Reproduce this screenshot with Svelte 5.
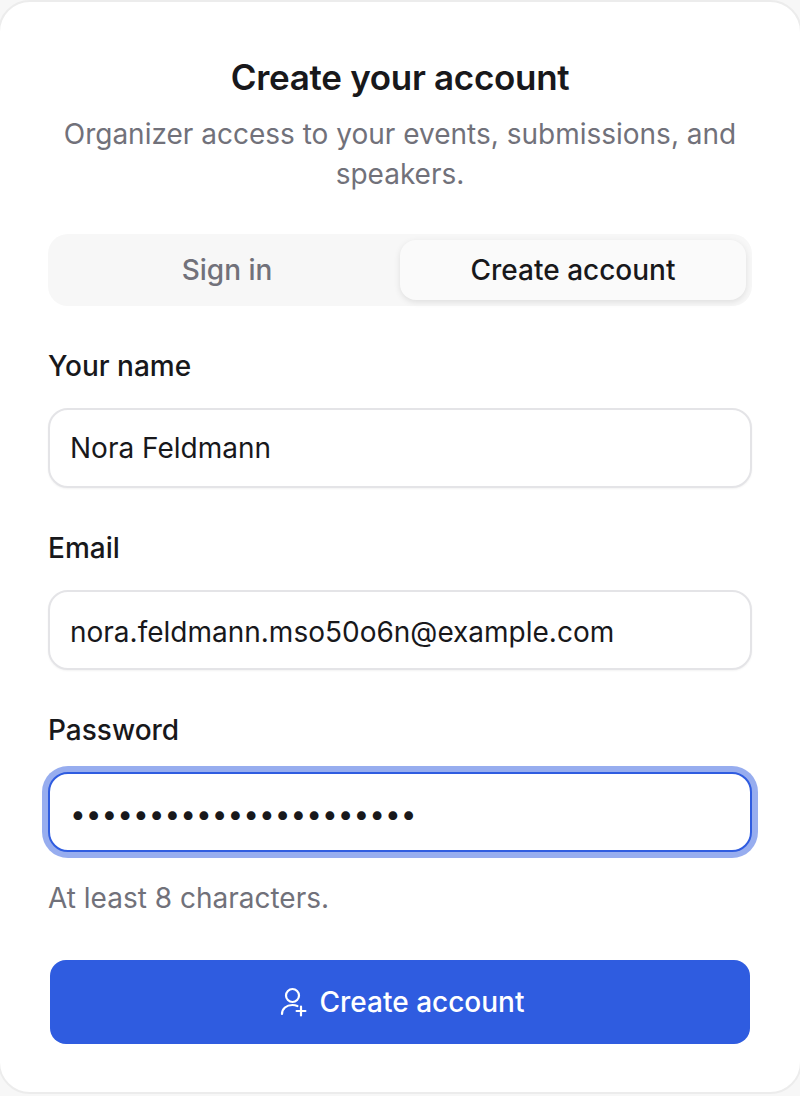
<script>
  let mode = $state('create');
  let name = $state('Nora Feldmann');
  let email = $state('nora.feldmann.mso50o6n@example.com');
  let password = $state('abcdefghijklmnopqrstuv');
</script>

<div class="page">
  <div class="card">
    <header class="head">
      <h1>Create your account</h1>
      <p>Organizer access to your events, submissions, and speakers.</p>
    </header>

    <div class="tabs">
      <button type="button" class="tab" class:active={mode === 'signin'} onclick={() => (mode = 'signin')}>Sign in</button>
      <button type="button" class="tab" class:active={mode === 'create'} onclick={() => (mode = 'create')}>Create account</button>
    </div>

    <form class="form" onsubmit={(e) => e.preventDefault()}>
      <div class="field">
        <label for="name">Your name</label>
        <input id="name" type="text" bind:value={name} />
      </div>
      <div class="field">
        <label for="email">Email</label>
        <input id="email" type="email" bind:value={email} />
      </div>
      <div class="field">
        <label for="password">Password</label>
        <input id="password" class="focused" type="password" bind:value={password} />
        <span class="hint">At least 8 characters.</span>
      </div>
      <button type="submit" class="submit">
        <svg width="32" height="32" viewBox="0 0 16 16" fill="none" stroke="currentColor" stroke-width="1.1" stroke-linecap="round" stroke-linejoin="round">
          <circle cx="8.25" cy="4.75" r="3.25" />
          <path d="M3 14c0-2.7 2.2-4.5 5.2-4.5 .9 0 1.8 .2 2.5 .5" />
          <path d="M12.5 10.3v4.4M10.3 12.5h4.4" />
        </svg>
        Create account
      </button>
    </form>
  </div>
</div>

<style>
  :global(body) {
    background: #f7f7f7;
    font-family: Inter, "Noto Sans", sans-serif;
  }

  .page {
    height: 1096px;
    padding-bottom: 2px;
    box-sizing: border-box;
    overflow: hidden;
  }

  /* side borders sit just outside the viewport */
  .card {
    height: 100%;
    box-sizing: border-box;
    margin: 0 -2px;
    background: #fff;
    border: 2px solid #ececec;
    border-radius: 32px;
    padding: 52px 48px 0;
  }

  .head {
    text-align: center;
    margin-bottom: 40px;
  }

  h1 {
    margin: 0;
    font-size: 35px;
    line-height: 46px;
    font-weight: 600;
    color: #18181b;
    letter-spacing: -0.3px;
  }

  .head p {
    margin: 14px 0 0;
    font-size: 28px;
    line-height: 40px;
    color: #71717a;
  }

  .tabs {
    display: grid;
    grid-template-columns: 1fr 1fr;
    height: 72px;
    padding: 6px;
    box-sizing: border-box;
    background: #f7f7f7;
    border-radius: 20px;
    margin-bottom: 40px;
  }

  .tab {
    border: none;
    background: transparent;
    border-radius: 16px;
    font: inherit;
    font-size: 28px;
    font-weight: 500;
    color: #71717a;
    cursor: pointer;
  }

  .tab.active {
    background: #fafafa;
    color: #18181b;
    box-shadow: 0 2px 6px rgba(0, 0, 0, 0.1);
  }

  .form {
    display: flex;
    flex-direction: column;
    gap: 40px;
  }

  .field {
    display: flex;
    flex-direction: column;
  }

  label {
    font-size: 28px;
    line-height: 40px;
    font-weight: 500;
    color: #18181b;
    margin-bottom: 22px;
  }

  input {
    height: 80px;
    box-sizing: border-box;
    padding: 0 20px;
    border: 2px solid #e4e4e7;
    border-radius: 20px;
    background: #fff;
    box-shadow: 0 1px 2px rgba(0, 0, 0, 0.05);
    font: inherit;
    font-size: 28px;
    color: #18181b;
    outline: none;
  }

  #email {
    padding-top: 4px;
  }

  input.focused {
    padding-top: 4px;
    border-color: #2f5ce0;
    box-shadow: 0 0 0 6px rgba(47, 92, 224, 0.5);
  }

  .hint {
    margin-top: 26px;
    margin-bottom: 1px;
    font-size: 28px;
    line-height: 40px;
    color: #71717a;
  }

  .submit {
    display: flex;
    align-items: center;
    justify-content: center;
    gap: 12px;
    height: 84px;
    margin: 1px 2px 0;
    border: none;
    border-radius: 16px;
    background: #2f5ce0;
    color: #fff;
    font: inherit;
    font-size: 28px;
    font-weight: 500;
    cursor: pointer;
  }
</style>
